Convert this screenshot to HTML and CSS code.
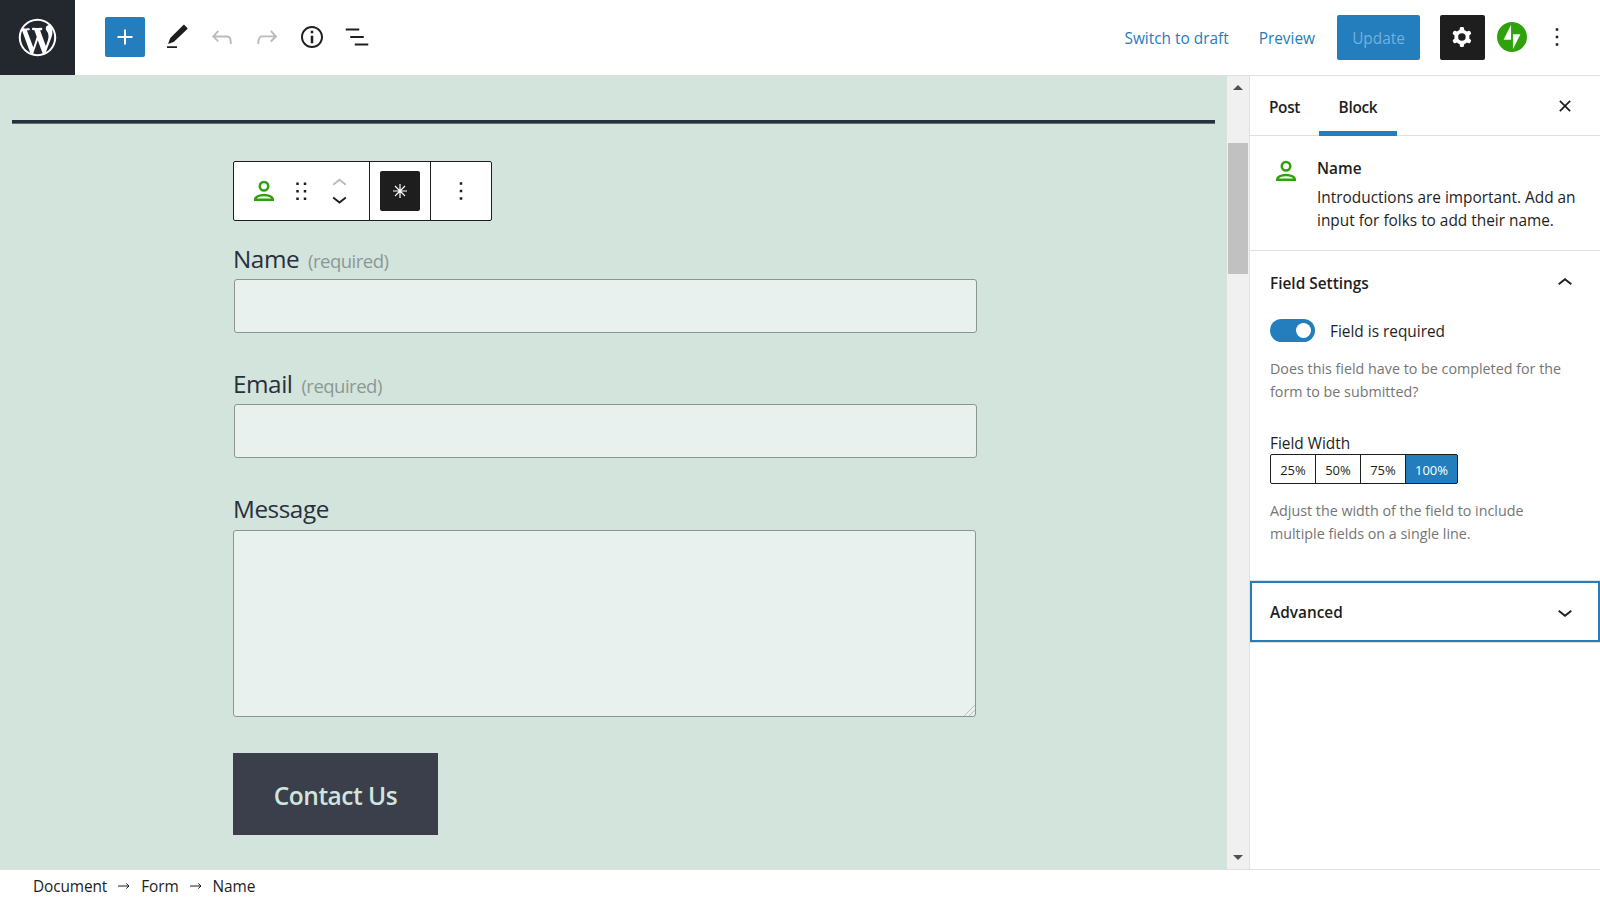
FILE: index.html
```html
<!DOCTYPE html>
<html lang="en">
<head>
  <meta charset="UTF-8">
  <title>Edit Post</title>
  <meta name="viewport" content="width=device-width, initial-scale=1.0">
  <link rel="stylesheet" href="styles.css">
</head>
<body>

  <!-- Top Bar -->
  <header class="header">
    <a class="logo" href="#">
      <svg width="45" height="45" viewBox="-2 -2 24 24"><path d="M20 10c0-5.51-4.49-10-10-10C4.48 0 0 4.49 0 10c0 5.52 4.48 10 10 10 5.51 0 10-4.48 10-10zM7.78 15.37L4.37 6.22c.55-.02 1.17-.08 1.17-.08.5-.06.44-1.13-.06-1.11 0 0-1.45.11-2.37.11-.18 0-.37 0-.58-.01C4.12 2.69 6.87 1.11 10 1.11c2.33 0 4.45.87 6.05 2.34-.68-.11-1.65.39-1.65 1.58 0 .74.45 1.36.9 2.1.35.61.55 1.36.55 2.46 0 1.49-1.4 5-1.4 5l-3.03-8.37c.54-.02.82-.17.82-.17.5-.05.44-1.25-.06-1.22 0 0-1.44.12-2.38.12-.87 0-2.33-.12-2.33-.12-.5-.03-.56 1.2-.06 1.22l.92.08 1.26 3.41zM17.41 10c.24-.64.74-1.87.43-4.25.7 1.29 1.05 2.71 1.05 4.25 0 3.29-1.73 6.24-4.4 7.78.97-2.59 1.94-5.2 2.92-7.78zM6.1 18.09C3.12 16.65 1.11 13.53 1.11 10c0-1.3.23-2.48.72-3.59C3.25 10.3 4.67 14.2 6.1 18.09zm4.03-6.63l2.58 6.98c-.86.29-1.76.45-2.71.45-.79 0-1.57-.11-2.29-.33.81-2.38 1.62-4.74 2.42-7.1z"/></svg>
    </a>
    <div class="tools">
      <button class="add-btn"><svg class="icon" viewBox="0 0 24 24"><path d="M18 11.2h-5.2V6h-1.6v5.2H6v1.6h5.2V18h1.6v-5.2H18z"/></svg></button>
      <button class="tool"><svg class="icon" viewBox="0 0 24 24"><path d="M20.3 4.7l-2.2-2.2c-.4-.4-.8-.4-1.2 0L6.6 12.8l-1.6 4.1c-.1.4.1.6.5.5l4.1-1.6L20.3 5.5c.2-.3.2-.6 0-.8zM4 20.8h8v-1.5H4v1.5z"/></svg></button>
      <button class="tool disabled"><svg class="icon" viewBox="0 0 24 24"><path d="M18.3 11.7c-.6-.6-1.4-.9-2.3-.9H6.7l2.9-3.3-1.1-1-4.5 5L8.5 16l1-1-2.7-2.7H16c.5 0 .9.2 1.3.5 1 1 1 3.4 1 4.5v.3h1.5v-.2c0-1.5 0-4.3-1.5-5.7z"/></svg></button>
      <button class="tool disabled"><svg class="icon" viewBox="0 0 24 24"><path d="M15.6 6.5l-1.1 1 2.9 3.3H8c-.9 0-1.7.3-2.3.9-1.4 1.5-1.4 4.2-1.4 5.6v.2h1.5v-.3c0-1.1 0-3.5 1-4.5.3-.3.7-.5 1.3-.5h9.2L14.5 15l1.1 1.1 4.6-4.6-4.6-5z"/></svg></button>
      <button class="tool"><svg class="icon" viewBox="0 0 24 24"><path d="M12 3.2c-4.8 0-8.8 3.9-8.8 8.8 0 4.8 3.9 8.8 8.8 8.8 4.8 0 8.8-3.9 8.8-8.8 0-4.8-4-8.8-8.8-8.8zm0 16c-4 0-7.2-3.3-7.2-7.2C4.8 8 8 4.8 12 4.8s7.2 3.3 7.2 7.2c0 4-3.2 7.2-7.2 7.2zM11 17h2v-6h-2v6zm0-8h2V7h-2v2z"/></svg></button>
      <button class="tool"><svg class="icon" viewBox="0 0 24 24"><path d="M13.8 5.2H3v1.5h10.8V5.2zm-3.6 12v1.5H21v-1.5H10.2zm7.2-6H6.6v1.5h10.8v-1.5z"/></svg></button>
    </div>
    <div class="actions">
      <a class="link" href="#">Switch to draft</a>
      <a class="link preview" href="#">Preview</a>
      <button class="update-btn">Update</button>
      <button class="settings-btn"><svg class="icon" viewBox="0 0 24 24"><path fill-rule="evenodd" d="M10.289 4.836A1 1 0 0111.275 4h1.306a1 1 0 01.987.836l.244 1.466c.787.26 1.503.679 2.108 1.218l1.393-.522a1 1 0 011.216.437l.653 1.13a1 1 0 01-.23 1.273l-1.148.944a6.025 6.025 0 010 2.435l1.149.946a1 1 0 01.23 1.272l-.653 1.13a1 1 0 01-1.216.437l-1.394-.522c-.605.54-1.32.958-2.108 1.218l-.244 1.466a1 1 0 01-.987.836h-1.306a1 1 0 01-.986-.836l-.244-1.466a5.995 5.995 0 01-2.108-1.218l-1.394.522a1 1 0 01-1.217-.436l-.653-1.131a1 1 0 01.23-1.272l1.149-.946a6.026 6.026 0 010-2.435l-1.148-.944a1 1 0 01-.23-1.272l.653-1.131a1 1 0 011.217-.437l1.393.522a5.994 5.994 0 012.108-1.218l.244-1.466zM14.929 12a3 3 0 11-6 0 3 3 0 016 0z"/></svg></button>
      <button class="tool jetpack"><svg class="icon" viewBox="0 0 32 32"><path d="M16,0C7.2,0,0,7.2,0,16s7.2,16,16,16s16-7.2,16-16S24.8,0,16,0z M15,19H7l8-16V19z M17,29V13h8L17,29z"/></svg></button>
      <button class="tool"><svg class="icon" viewBox="0 0 24 24"><path d="M13 19h-2v-2h2v2zm0-6h-2v-2h2v2zm0-6h-2V5h2v2z"/></svg></button>
    </div>
  </header>

  <div class="body">
    <!-- Editor Canvas -->
    <main class="canvas">
      <hr class="separator">
      <div class="form">
        <div class="toolbar">
          <div class="group mover">
            <svg class="icon person" viewBox="0 0 24 24"><circle cx="12" cy="8.2" r="3.4"/><path d="M5 19v-.5c0-1.6 3-3.4 7-3.4s7 1.8 7 3.4v.5z"/></svg>
            <svg class="drag" viewBox="0 0 18 18"><path d="M5 4h2V2H5v2zm6-2v2h2V2h-2zm-6 8h2V8H5v2zm6 0h2V8h-2v2zm-6 6h2v-2H5v2zm6 0h2v-2h-2v2z"/></svg>
            <div class="arrows">
              <svg class="disabled" viewBox="6 7 12 7"><path d="M6.5 12.4L12 8l5.5 4.4-.9 1.2L12 10l-4.6 3.6-.9-1.2z"/></svg>
              <svg viewBox="6 10 12 7"><path d="M17.5 11.6L12 16l-5.5-4.4.9-1.2L12 14l4.6-3.6.9 1.2z"/></svg>
            </div>
          </div>
          <div class="group">
            <button class="required-btn">
              <svg width="16" height="16" viewBox="0 0 16 16"><path d="M8 1v14M1 8h14M3 3l10 10M13 3L3 13"/></svg>
            </button>
          </div>
          <div class="group last">
            <svg class="icon" viewBox="0 0 24 24"><path d="M13 19h-2v-2h2v2zm0-6h-2v-2h2v2zm0-6h-2V5h2v2z"/></svg>
          </div>
        </div>

        <div class="field">
          <label for="name">Name <span class="req">(required)</span></label>
          <input type="text" id="name">
        </div>
        <div class="field">
          <label for="email">Email <span class="req">(required)</span></label>
          <input type="text" id="email">
        </div>
        <div class="field">
          <label for="message">Message</label>
          <div class="textarea" id="message">
            <svg class="grip" width="12" height="12" viewBox="0 0 12 12"><path d="M1 12L12 1M6 12l6-6"/></svg>
          </div>
        </div>
        <button class="submit">Contact Us</button>
      </div>
    </main>

    <div class="scrollbar">
      <span class="arrow up"></span>
      <span class="thumb"></span>
      <span class="arrow down"></span>
    </div>

    <!-- Settings Sidebar -->
    <aside class="sidebar">
      <div class="tabs">
        <button class="tab post">Post</button>
        <button class="tab active">Block</button>
        <button class="close"><svg viewBox="0 0 11 11"><path d="M.8 .8l9.4 9.4M10.2 .8L.8 10.2"/></svg></button>
      </div>

      <div class="card">
        <svg class="icon person" viewBox="0 0 24 24"><circle cx="12" cy="8.2" r="3.4"/><path d="M5 19v-.5c0-1.6 3-3.4 7-3.4s7 1.8 7 3.4v.5z"/></svg>
        <div>
          <h2>Name</h2>
          <p>Introductions are important. Add an<br>input for folks to add their name.</p>
        </div>
      </div>

      <section class="panel">
        <h2 class="panel-title"><span>Field Settings</span>
          <svg class="icon" viewBox="0 0 24 24"><path d="M6.5 12.4L12 8l5.5 4.4-.9 1.2L12 10l-4.6 3.6-.9-1.2z"/></svg>
        </h2>
        <div class="toggle-row">
          <span class="toggle"></span>
          <span class="toggle-label">Field is required</span>
        </div>
        <p class="help">Does this field have to be completed for the<br>form to be submitted?</p>

        <div class="width-label">Field Width</div>
        <div class="widths">
          <button>25%</button>
          <button>50%</button>
          <button>75%</button>
          <button class="selected">100%</button>
        </div>
        <p class="help wide">Adjust the width of the field to include<br>multiple fields on a single line.</p>
      </section>

      <section class="advanced">
        <h2>Advanced</h2>
        <svg class="icon" viewBox="0 0 24 24"><path d="M17.5 11.6L12 16l-5.5-4.4.9-1.2L12 14l4.6-3.6.9 1.2z"/></svg>
      </section>
    </aside>
  </div>

  <!-- Breadcrumb -->
  <footer class="footer">
    <span>Document</span>
    <svg width="12" height="8" viewBox="0 0 12 8"><path d="M0 4h11M8.2 1.4L11 4 8.2 6.6"/></svg>
    <span>Form</span>
    <svg width="12" height="8" viewBox="0 0 12 8"><path d="M0 4h11M8.2 1.4L11 4 8.2 6.6"/></svg>
    <span>Name</span>
  </footer>

</body>
</html>
```
FILE: styles.css
```css
/* Reset and Basic Styles */
* {
  margin: 0;
  padding: 0;
  box-sizing: border-box;
}

body {
  height: 900px;
  display: flex;
  flex-direction: column;
  overflow: hidden;
  background: #fff;
  color: #1e1e1e;
  font-family: 'Open Sans', 'Noto Sans', sans-serif;
  font-size: 15.4px;
}

button {
  font: inherit;
  color: inherit;
  background: none;
  border: none;
  cursor: pointer;
}

a {
  text-decoration: none;
}

svg {
  display: block;
  fill: currentColor;
}

h2 {
  font-size: 15.4px;
  font-weight: 600;
}

.icon {
  width: 30px;
  height: 30px;
  flex: none;
}

.person {
  fill: none;
  stroke: #2fa10c;
  stroke-width: 2;
}

.disabled {
  color: #bbb;
}

/* Top Bar */
.header {
  height: 76px;
  flex: none;
  display: flex;
  border-bottom: 1px solid #e0e0e0;
}

.logo {
  width: 75px;
  height: 75px;
  display: flex;
  align-items: center;
  justify-content: center;
  background: #23282e;
  color: #fff;
}

.tools {
  display: flex;
  align-items: center;
  margin-left: 30px;
}

.add-btn {
  width: 40px;
  height: 40px;
  margin: 0 10px 1px 0;
  padding: 5px;
  border-radius: 2px;
  background: #247dbc;
  color: #fff;
}

.tool {
  width: 45px;
  height: 45px;
  padding: 7px 8px 8px 7px;
}

.actions {
  display: flex;
  align-items: center;
  margin-left: auto;
  padding-right: 20px;
}

.link {
  padding-top: 2px;
  color: #247dbc;
}

.preview {
  margin: 0 22px 0 30px;
}

.update-btn {
  width: 83px;
  height: 45px;
  margin-right: 20px;
  padding-top: 2px;
  border-radius: 2px;
  background: #247dbc;
  color: #72b1dd;
}

.settings-btn {
  width: 45px;
  height: 45px;
  padding: 7px 8px 8px 7px;
  border-radius: 2px;
  background: #1e1e1e;
  color: #fff;
}

.jetpack {
  margin-left: 5px;
  color: #2fa10c;
}

/* Layout */
.body {
  flex: 1;
  display: flex;
  min-height: 0;
}

.canvas {
  flex: 1;
  padding: 44px 12px 0;
  background: #d3e4dc;
  color: #28303d;
}

.separator {
  height: 4px;
  border: none;
  border-bottom: 1px solid #626c74;
  background: #28303d;
}

.form {
  width: 743px;
  margin: 37px 0 0 221px;
}

/* Block Toolbar */
.toolbar {
  width: 259px;
  height: 60px;
  display: flex;
  border: 1px solid #1e1e1e;
  border-radius: 2px;
  background: #fff;
  color: #1e1e1e;
}

.group {
  width: 61px;
  display: flex;
  align-items: center;
  justify-content: center;
  border-right: 1px solid #1e1e1e;
}

.group.mover {
  width: 136px;
  justify-content: flex-start;
  padding-left: 15px;
}

.group.last {
  width: 60px;
  border-right: none;
}

.drag {
  width: 22.5px;
  height: 22.5px;
  margin-left: 11px;
}

.arrows {
  margin-left: 19px;
}

.arrows svg {
  width: 15px;
  height: 9px;
}

.arrows svg + svg {
  margin-top: 10px;
}

.required-btn {
  width: 40px;
  height: 40px;
  padding: 12px;
  border-radius: 2px;
  background: #1e1e1e;
  color: #fff;
}

.required-btn path {
  fill: none;
  stroke: #fff;
  stroke-width: 1.2;
}

/* Contact Form */
.field {
  margin-bottom: 30px;
}

.toolbar + .field {
  margin-top: 17px;
}

.field label {
  display: block;
  height: 41px;
  line-height: 42px;
  font-size: 24.3px;
  letter-spacing: -0.45px;
}

.req {
  margin-left: 3px;
  font-size: 18.5px;
  letter-spacing: -0.5px;
  color: #8b9896;
}

.field input {
  display: block;
  width: 743px;
  height: 54px;
  margin-left: 1px;
  border: 1px solid #8b9692;
  border-radius: 3px;
  background: #e8f1ed;
}

.textarea {
  position: relative;
  height: 187px;
  margin-top: 1px;
  border: 1px solid #8b9692;
  border-radius: 3px;
  background: #e8f1ed;
}

.grip {
  position: absolute;
  right: 0;
  bottom: 0;
}

.grip path {
  fill: none;
  stroke: #b9c1be;
}

.submit {
  width: 205px;
  height: 82px;
  margin-top: 6px;
  padding-top: 2px;
  background: #3a3f4b;
  color: #d1e4dd;
  font-size: 24.5px;
  font-weight: 600;
  letter-spacing: -0.5px;
}

/* Scrollbar */
.scrollbar {
  width: 22px;
  display: flex;
  flex-direction: column;
  align-items: center;
  padding: 9px 0;
  background: #f0f0f0;
}

.arrow {
  border: 5px solid transparent;
}

.arrow.up {
  border-top: none;
  border-bottom-color: #505050;
}

.arrow.down {
  margin-top: auto;
  border-bottom: none;
  border-top-color: #505050;
}

.thumb {
  width: 20px;
  height: 131px;
  margin-top: 53px;
  background: #c1c1c1;
}

/* Settings Sidebar */
.sidebar {
  width: 351px;
  border-left: 1px solid #e0e0e0;
}

.tabs {
  height: 60px;
  display: flex;
  border-bottom: 1px solid #e0e0e0;
}

.tab {
  width: 78px;
  height: 60px;
  padding-top: 2px;
  font-weight: 600;
  letter-spacing: -0.3px;
}

.tab.post {
  width: 69px;
}

.tab.active {
  box-shadow: inset 0 -5px #247dbc;
}

.close {
  margin: 0 29px 0 auto;
}

.close svg {
  width: 12px;
  height: 12px;
}

.close path {
  stroke: #1e1e1e;
  stroke-width: 1.6;
}

.card {
  height: 115px;
  display: flex;
  padding: 20px 0 0 21px;
  border-bottom: 1px solid #e0e0e0;
}

.card h2 {
  padding-top: 1px;
  line-height: 24px;
}

.card div {
  margin-left: 16px;
}

.card p {
  margin-top: 6px;
  line-height: 22.5px;
}

.panel {
  height: 330px;
  padding-left: 20px;
  border-bottom: 1px solid #e0e0e0;
}

.panel-title {
  height: 63px;
  display: flex;
  align-items: center;
  justify-content: space-between;
  padding-right: 20px;
}

.panel-title span,
.advanced h2 {
  padding-top: 2px;
}

.toggle-row {
  display: flex;
  align-items: center;
  margin-top: 5px;
}

.toggle {
  width: 45px;
  height: 23px;
  padding: 4px;
  border-radius: 12px;
  background: #247dbc;
}

.toggle::after {
  content: '';
  display: block;
  width: 15px;
  height: 15px;
  margin-left: auto;
  border-radius: 50%;
  background: #fff;
}

.toggle-label {
  margin-left: 15px;
  padding-top: 2px;
}

.help {
  margin-top: 16px;
  font-size: 14.3px;
  line-height: 22.5px;
  color: #757575;
}

.width-label {
  margin-top: 30px;
  line-height: 22px;
}

.widths {
  display: flex;
  margin-top: -1px;
}

.widths button {
  width: 46px;
  height: 30px;
  margin-right: -1px;
  padding-top: 1px;
  border: 1px solid #1e1e1e;
  font-size: 13px;
}

.widths button:first-child {
  border-radius: 2px 0 0 2px;
}

.widths .selected {
  width: 53px;
  border-radius: 0 2px 2px 0;
  background: #247dbc;
  color: #fff;
}

.help.wide {
  margin-top: 16px;
}

.advanced {
  height: 61px;
  display: flex;
  align-items: center;
  justify-content: space-between;
  padding: 0 18px;
  border: 2px solid #247dbc;
  box-shadow: 0 1px #e0e0e0;
}

/* Breadcrumb */
.footer {
  height: 31px;
  flex: none;
  display: flex;
  align-items: center;
  gap: 11px;
  padding: 2px 0 0 33px;
  border-top: 1px solid #e0e0e0;
  letter-spacing: -0.1px;
}

.footer path {
  fill: none;
  stroke: #1e1e1e;
}
```
